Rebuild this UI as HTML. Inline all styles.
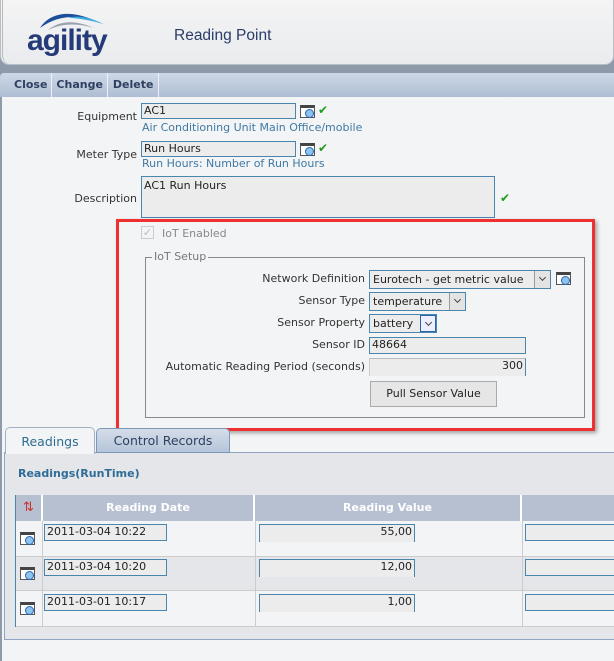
<!DOCTYPE html>
<html><head><style>
*{box-sizing:border-box}
body{margin:0;width:614px;height:661px;overflow:hidden;background:#8e99aa;font-family:"DejaVu Sans",Verdana,sans-serif;font-size:11px;color:#333;position:relative}
.a{position:absolute}
.lbl{position:absolute;text-align:right;color:#333;font-size:11px}
.inp{position:absolute;background:#ececec;border:1px solid #4a85ad;font-size:11px;padding:0 2px;color:#222;line-height:14px}
.sub{position:absolute;color:#3f79a3;font-size:11px}
.chk{position:absolute;color:#1f9a1f;font-size:12px;font-weight:bold}
.mag{position:absolute;width:15px;height:13px;border:1px solid #555;border-top:3px solid #444;background:#fff}
.mag:after{content:"";position:absolute;left:4px;top:1px;width:7px;height:7px;border-radius:50%;background:#8cc4ef;border:1px solid #2966b0}
.sel{position:absolute;background:#ececec;border:1px solid #4a85ad;font-size:11px;padding:1px 3px;color:#222;line-height:15px}
.arr{position:absolute;right:0;top:0;bottom:0;width:16px;border-left:1px solid #999;background:#e3e3e3}
.arr:after{content:"";position:absolute;left:5px;top:4px;width:4px;height:4px;border-right:1px solid #444;border-bottom:1px solid #444;transform:rotate(45deg)}
</style></head><body>
<div class="a" style="left:0;top:0;width:614px;height:65px;background:linear-gradient(#f4f4f4,#e9ebee);border:1px solid #b8bec8;border-radius:0 0 9px 9px;border-top:none"></div>
<div class="a" style="left:2px;top:0;width:612px;height:64px;border-left:1px solid #bbb;border-radius:0 0 0 9px"></div>
<svg class="a" style="left:26px;top:6px" width="80" height="28" viewBox="0 0 80 28"><path d="M14 22 C24 6,46 2,76 18 C58 10,36 6,14 22Z" fill="#1c4e9a"/><path d="M22 24 C34 14,50 14,68 22 C52 17,36 17,22 24Z" fill="#9aa3ad"/><path d="M42 12 C56 8,68 14,78 18 C66 15,54 12,42 12Z" fill="#3aa9e0"/></svg>
<div class="a" style="left:27px;top:24px;font-size:30px;font-weight:bold;color:#253a78;letter-spacing:-1px;font-family:'Liberation Sans',sans-serif">agility</div>
<div class="a" style="left:174px;top:27px;font-size:15.5px;color:#2b3c6a;font-family:'Liberation Sans',sans-serif">Reading Point</div>
<div class="a" style="left:0;top:73px;width:614px;height:24px;background:linear-gradient(#ced9e7,#aebdd2);border-radius:4px 0 0 0"></div>
<div class="a" style="left:0;top:73px;height:24px;line-height:24px;font-weight:bold;color:#2e3f60;font-size:11px">
<span style="display:inline-block;padding:0 4px 0 14px;border-right:1px solid #eef">Close</span><span style="display:inline-block;padding:0 4px;border-right:1px solid #eef">Change</span><span style="display:inline-block;padding:0 5px;border-right:1px solid #eef">Delete</span></div>
<div class="a" style="left:2px;top:97px;width:612px;height:564px;background:#f3f4f6"></div>

<div class="lbl" style="left:30px;width:107px;top:110px">Equipment</div>
<div class="inp" style="left:141px;top:103px;width:155px;height:16px">AC1</div>
<div class="mag" style="left:300px;top:105px"></div><div class="chk" style="left:318px;top:103px">✔</div>
<div class="sub" style="left:142px;top:121px">Air Conditioning Unit Main Office/mobile</div>
<div class="lbl" style="left:30px;width:107px;top:148px">Meter Type</div>
<div class="inp" style="left:141px;top:141px;width:155px;height:16px">Run Hours</div>
<div class="mag" style="left:300px;top:143px"></div><div class="chk" style="left:318px;top:141px">✔</div>
<div class="sub" style="left:142px;top:157px">Run Hours: Number of Run Hours</div>
<div class="lbl" style="left:30px;width:107px;top:192px">Description</div>
<div class="inp" style="left:141px;top:176px;width:354px;height:42px;padding-top:2px">AC1 Run Hours</div>
<div class="chk" style="left:500px;top:191px">✔</div>

<div class="a" style="left:116px;top:219px;width:479px;height:212px;border:3px solid #ef3030;box-shadow:2px 2px 4px rgba(0,0,0,.35)"></div>
<div class="a" style="left:141px;top:226px;width:13px;height:13px;border:1px solid #ccc;color:#bbb;font-size:11px;line-height:11px;text-align:center">✓</div>
<div class="a" style="left:162px;top:227px;color:#888">IoT Enabled</div>
<div class="a" style="left:145px;top:257px;width:440px;height:161px;border:1px solid #888"></div>
<div class="a" style="left:152px;top:250px;background:#f3f4f6;color:#777;padding:0 2px">IoT Setup</div>
<div class="lbl" style="left:130px;width:235px;top:272px">Network Definition</div>
<div class="sel" style="left:369px;top:270px;width:182px;height:19px">Eurotech - get metric value<div class="arr"></div></div>
<div class="mag" style="left:556px;top:272px"></div>
<div class="lbl" style="left:130px;width:235px;top:294px">Sensor Type</div>
<div class="sel" style="left:369px;top:292px;width:97px;height:19px">temperature<div class="arr"></div></div>
<div class="lbl" style="left:130px;width:235px;top:316px">Sensor Property</div>
<div class="sel" style="left:369px;top:314px;width:68px;height:19px">battery<div class="arr" style="border:1px solid #2766a8;background:#eef"></div></div>
<div class="lbl" style="left:130px;width:235px;top:338px">Sensor ID</div>
<div class="inp" style="left:369px;top:337px;width:157px;height:17px">48664</div>
<div class="lbl" style="left:130px;width:235px;top:360px">Automatic Reading Period (seconds)</div>
<div class="inp" style="left:369px;top:358px;width:157px;height:18px;text-align:right;border-top:1px solid #bbb;border-left:1px solid #ccc;border-bottom:none">300</div>
<div class="a" style="left:370px;top:381px;width:127px;height:26px;border:1px solid #aaa;background:#e6e6e6;text-align:center;line-height:24px;color:#222">Pull Sensor Value</div>

<div class="a" style="left:4px;top:452px;width:612px;height:188px;border:1px solid #8fa6c2;background:#e4e6ea"></div>
<div class="a" style="left:5px;top:427px;width:90px;height:27px;border:1px solid #9fb2c8;border-bottom:none;border-radius:5px 5px 0 0;background:#f3f4f6;text-align:center;line-height:27px;color:#2e6c8f;font-size:12.5px">Readings</div>
<div class="a" style="left:96px;top:428px;width:134px;height:25px;border:1px solid #7d97b8;border-radius:5px 5px 0 0;background:linear-gradient(#d4dde9,#b6c5da);text-align:center;line-height:24px;color:#2e3f60;font-size:12.5px">Control Records</div>
<div class="a" style="left:18px;top:467px;font-weight:bold;color:#2f6c96;font-size:11px">Readings(RunTime)</div>
<div class="a" style="left:15px;top:495px;width:599px;height:132px;background:#f3f4f6;border-left:1px solid #4a85ad"></div>
<div class="a" style="left:16px;top:495px;width:27px;height:26px;background:#b6c0d0;border-right:2px solid #fff;color:#c33;font-size:13px;text-align:center;line-height:26px">⇅</div>
<div class="a" style="left:43px;top:495px;width:212px;height:26px;background:#b6c0d0;border-right:2px solid #fff;color:#fff;font-weight:bold;text-align:center;line-height:26px">Reading Date</div>
<div class="a" style="left:255px;top:495px;width:267px;height:26px;background:#b6c0d0;border-right:2px solid #fff;color:#fff;font-weight:bold;text-align:center;line-height:26px">Reading Value</div>
<div class="a" style="left:522px;top:495px;width:92px;height:26px;background:#b6c0d0"></div>

<div class="a" style="left:16px;top:556px;width:598px;height:35px;background:#e4e6ea;border-top:1px solid #ccc;border-bottom:1px solid #ccc"></div>
<div class="a" style="left:16px;top:626px;width:598px;height:1px;background:#ccc"></div>
<div class="a" style="left:42px;top:521px;width:1px;height:106px;background:#ccc"></div>
<div class="a" style="left:255px;top:521px;width:1px;height:106px;background:#ccc"></div>
<div class="a" style="left:522px;top:521px;width:1px;height:106px;background:#ccc"></div>

<div class="mag" style="left:20px;top:532px"></div>
<div class="inp" style="left:44px;top:524px;width:123px;height:17px">2011-03-04 10:22</div>
<div class="inp" style="left:259px;top:524px;width:156px;height:18px;text-align:right;border-bottom:none">55,00</div>
<div class="a" style="left:525px;top:524px;width:90px;height:17px;border:1px solid #4a85ad;background:#ececec"></div>
<div class="mag" style="left:20px;top:567px"></div>
<div class="inp" style="left:44px;top:559px;width:123px;height:17px">2011-03-04 10:20</div>
<div class="inp" style="left:259px;top:559px;width:156px;height:18px;text-align:right;border-bottom:none">12,00</div>
<div class="a" style="left:525px;top:559px;width:90px;height:17px;border:1px solid #4a85ad;background:#ececec"></div>
<div class="mag" style="left:20px;top:602px"></div>
<div class="inp" style="left:44px;top:594px;width:123px;height:17px">2011-03-01 10:17</div>
<div class="inp" style="left:259px;top:594px;width:156px;height:18px;text-align:right;border-bottom:none">1,00</div>
<div class="a" style="left:525px;top:594px;width:90px;height:17px;border:1px solid #4a85ad;background:#ececec"></div>
</body></html>
